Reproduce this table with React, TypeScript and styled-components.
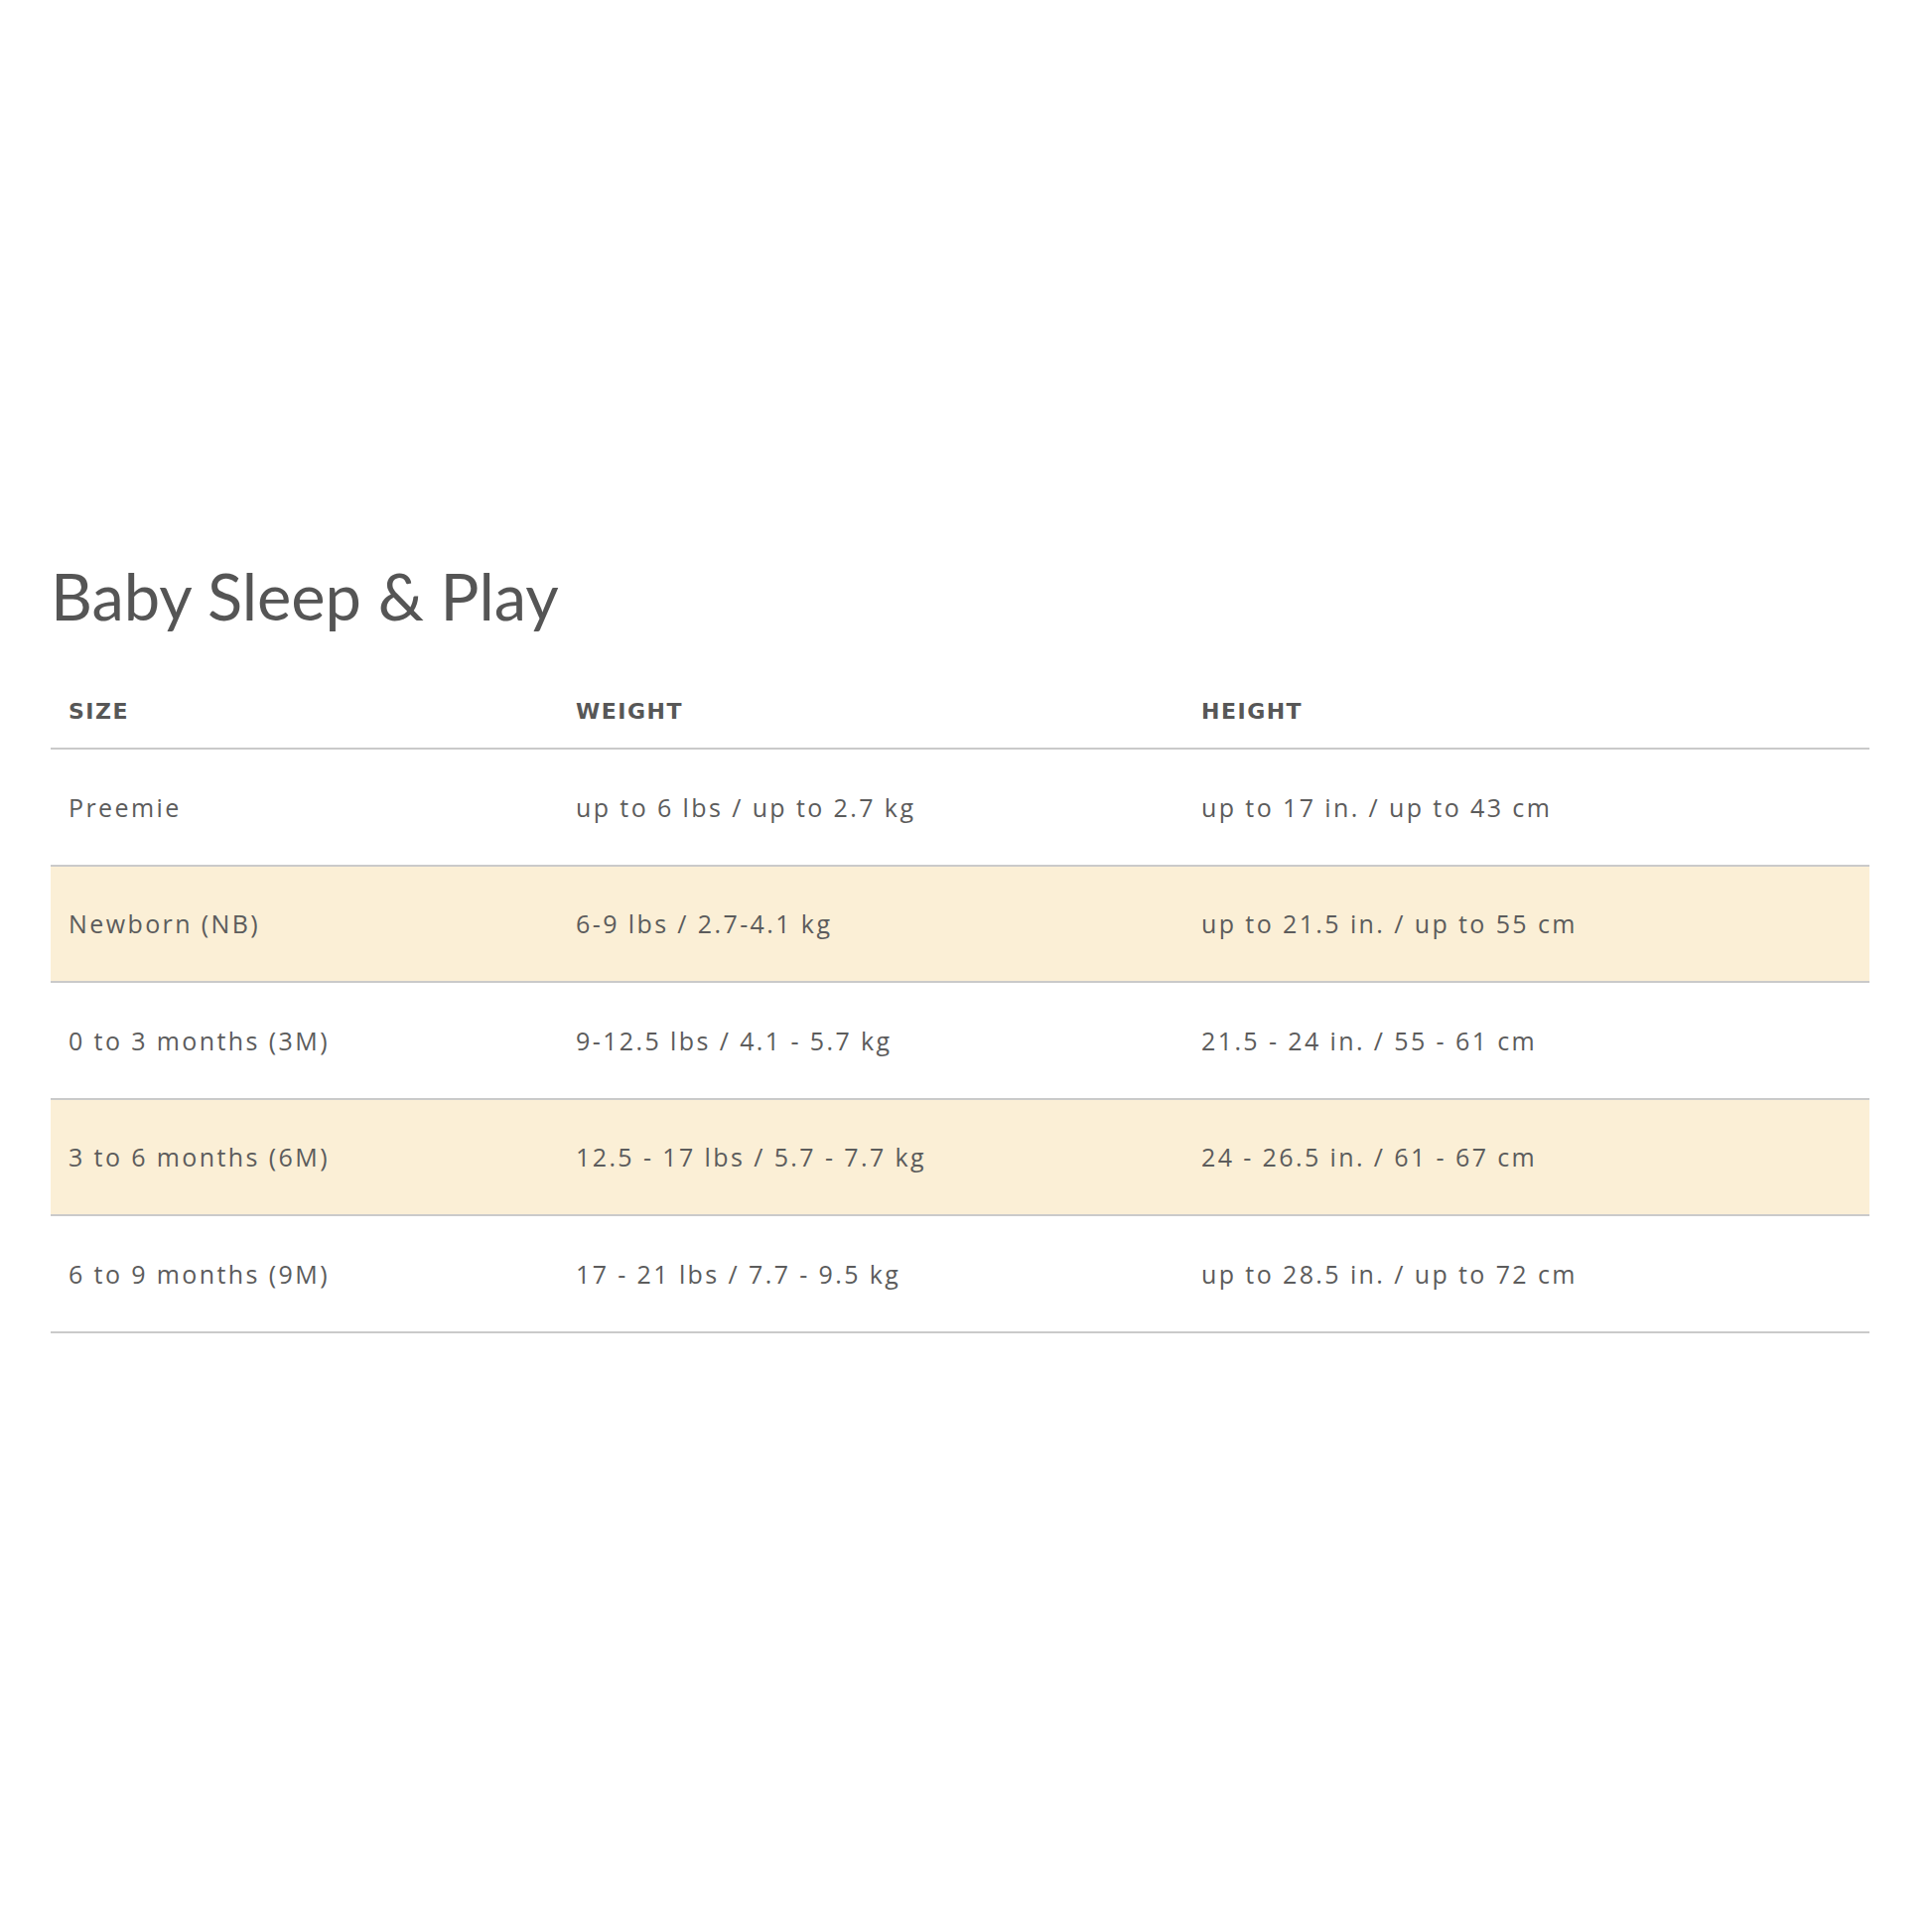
import styled, { createGlobalStyle } from "styled-components";

type SizeRow = {
  size: string;
  weight: string;
  height: string;
};

const rows: SizeRow[] = [
  { size: "Preemie", weight: "up to 6 lbs / up to 2.7 kg", height: "up to 17 in. / up to 43 cm" },
  { size: "Newborn (NB)", weight: "6-9 lbs / 2.7-4.1 kg", height: "up to 21.5 in. / up to 55 cm" },
  { size: "0 to 3 months (3M)", weight: "9-12.5 lbs / 4.1 - 5.7 kg", height: "21.5 - 24 in. / 55 - 61 cm" },
  { size: "3 to 6 months (6M)", weight: "12.5 - 17 lbs / 5.7 - 7.7 kg", height: "24 - 26.5 in. / 61 - 67 cm" },
  { size: "6 to 9 months (9M)", weight: "17 - 21 lbs / 7.7 - 9.5 kg", height: "up to 28.5 in. / up to 72 cm" },
];

export default function App() {
  return (
    <>
      <GlobalStyle />
      <Page>
        <Title>Baby Sleep &amp; Play</Title>
        <Table>
          <HeaderRow>
            <HeaderCell>Size</HeaderCell>
            <HeaderCell>Weight</HeaderCell>
            <HeaderCell>Height</HeaderCell>
          </HeaderRow>
          {rows.map((row, i) => (
            <Row key={row.size} $shaded={i % 2 === 1}>
              <Cell>{row.size}</Cell>
              <Cell>{row.weight}</Cell>
              <Cell>{row.height}</Cell>
            </Row>
          ))}
        </Table>
      </Page>
    </>
  );
}

const GlobalStyle = createGlobalStyle`
  html, body {
    margin: 0;
    background: #ffffff;
  }
`;

const Page = styled.main`
  width: 1946px;
  min-height: 1946px;
  box-sizing: border-box;
  padding: 561px 63px 0 51px;
`;

const Title = styled.h1`
  margin: 0;
  font-family: Lato, "Open Sans", sans-serif;
  font-weight: 400;
  font-size: 65px;
  line-height: 1.2;
  color: #555555;
`;

const Table = styled.div`
  margin-top: 41px;
  display: flex;
  flex-direction: column;
`;

const columns = `
  display: grid;
  grid-template-columns: 511px 630px 1fr;
  align-items: center;
  box-sizing: border-box;
  border-bottom: 2px solid #cacaca;
`;

const HeaderRow = styled.div`
  ${columns}
  height: 75px;
`;

const HeaderCell = styled.div`
  padding-left: 18px;
  font-family: "DejaVu Sans", sans-serif;
  font-weight: 700;
  font-size: 22px;
  letter-spacing: 1.5px;
  text-transform: uppercase;
  color: #575757;
`;

const Row = styled.div<{ $shaded: boolean }>`
  ${columns}
  height: 117.5px;
  background: ${(p) => (p.$shaded ? "#fbefd6" : "#ffffff")};
`;

const Cell = styled.div`
  padding-left: 18px;
  font-family: "Open Sans", sans-serif;
  font-weight: 400;
  font-size: 25px;
  letter-spacing: 2.4px;
  color: #5c5c5c;
`;
